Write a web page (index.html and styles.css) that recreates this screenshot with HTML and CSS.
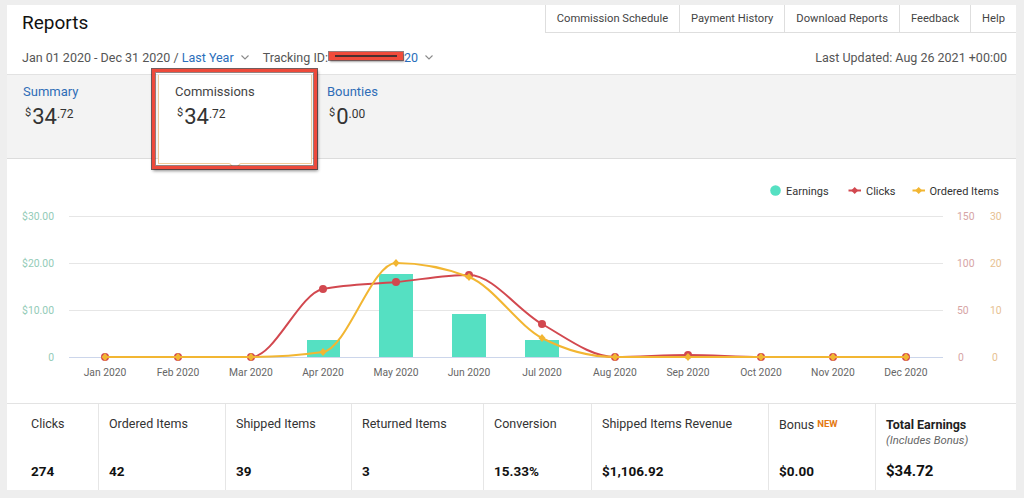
FILE: index.html
```html
<!DOCTYPE html>
<html lang="en">
<head>
<meta charset="utf-8">
<title>Reports</title>
<link rel="stylesheet" href="styles.css">
</head>
<body>
<div class="card">
  <header class="top">
    <h1 class="title">Reports</h1>
    <nav class="tabs">
      <a class="tab">Commission Schedule</a>
      <a class="tab">Payment History</a>
      <a class="tab">Download Reports</a>
      <a class="tab">Feedback</a>
      <a class="tab">Help</a>
    </nav>
  </header>

  <div class="filters">
    <div class="range">
      <span>Jan 01 2020 - Dec 31 2020 / </span><a class="link">Last Year</a><svg class="chev" width="8" height="5" viewBox="0 0 8 5"><path d="M0.5 0.5 L4 4 L7.5 0.5" fill="none" stroke="#8a8a8a" stroke-width="1.1"/></svg>
      <span class="tracking">Tracking ID:</span><span class="redact"></span><a class="link">20</a><svg class="chev" width="8" height="5" viewBox="0 0 8 5"><path d="M0.5 0.5 L4 4 L7.5 0.5" fill="none" stroke="#8a8a8a" stroke-width="1.1"/></svg>
    </div>
    <div class="updated">Last Updated: Aug 26 2021 +00:00</div>
  </div>

  <section class="summary">
    <div class="stab first">
      <div class="slabel">Summary</div>
      <div class="amt"><span class="cur">$</span>34<span class="cents">.72</span></div>
    </div>
    <div class="stab active">
      <div class="slabel">Commissions</div>
      <div class="amt"><span class="cur">$</span>34<span class="cents">.72</span></div>
    </div>
    <div class="stab last">
      <div class="slabel">Bounties</div>
      <div class="amt"><span class="cur">$</span>0<span class="cents">.00</span></div>
    </div>
  </section>
  <div class="annot"></div>

  <section class="chart">
    <svg width="1009" height="244" viewBox="7 159 1009 244" xmlns="http://www.w3.org/2000/svg">
      <!-- legend -->
      <circle cx="775.5" cy="190.5" r="5.3" fill="#55e0c2"/>
      <text class="lg" x="786" y="194.5">Earnings</text>
      <line x1="848.5" y1="190.5" x2="861" y2="190.5" stroke="#d2484f" stroke-width="2"/>
      <path d="M854.7 187 L858.2 190.5 L854.7 194 L851.2 190.5Z" fill="#d2484f"/>
      <text class="lg" x="866" y="194.5">Clicks</text>
      <line x1="912.5" y1="190.5" x2="925" y2="190.5" stroke="#f2b632" stroke-width="2"/>
      <path d="M918.7 187 L922.2 190.5 L918.7 194 L915.2 190.5Z" fill="#f2b632"/>
      <text class="lg" x="929.5" y="194.5">Ordered Items</text>

      <!-- grid -->
      <g stroke="#e6e6e6" stroke-width="1">
        <line x1="69" y1="216.5" x2="943" y2="216.5"/>
        <line x1="69" y1="263.5" x2="943" y2="263.5"/>
        <line x1="69" y1="310.5" x2="943" y2="310.5"/>
      </g>
      <line x1="69" y1="357.5" x2="943" y2="357.5" stroke="#ccd6eb" stroke-width="1"/>

      <!-- left axis -->
      <g class="ax-l" text-anchor="end">
        <text x="54" y="219.5">$30.00</text>
        <text x="54" y="266.5">$20.00</text>
        <text x="54" y="313.5">$10.00</text>
        <text x="54" y="360.5">0</text>
      </g>
      <!-- right axes -->
      <g class="ax-r1">
        <text x="957" y="219.5">150</text>
        <text x="957" y="266.5">100</text>
        <text x="957" y="313.5">50</text>
        <text x="958" y="360.5">0</text>
      </g>
      <g class="ax-r2">
        <text x="990" y="219.5">30</text>
        <text x="990" y="266.5">20</text>
        <text x="990" y="313.5">10</text>
        <text x="992" y="360.5">0</text>
      </g>

      <!-- x axis -->
      <g class="ax-x" text-anchor="middle">
        <text x="105" y="375.5">Jan 2020</text>
        <text x="178" y="375.5">Feb 2020</text>
        <text x="251" y="375.5">Mar 2020</text>
        <text x="323" y="375.5">Apr 2020</text>
        <text x="396" y="375.5">May 2020</text>
        <text x="469" y="375.5">Jun 2020</text>
        <text x="542" y="375.5">Jul 2020</text>
        <text x="615" y="375.5">Aug 2020</text>
        <text x="688" y="375.5">Sep 2020</text>
        <text x="761" y="375.5">Oct 2020</text>
        <text x="833" y="375.5">Nov 2020</text>
        <text x="906" y="375.5">Dec 2020</text>
      </g>

      <!-- bars -->
      <g fill="#55e0c2">
        <rect x="307" y="340" width="33" height="17"/>
        <rect x="379" y="274" width="34" height="83"/>
        <rect x="452" y="314" width="34" height="43"/>
        <rect x="525" y="340" width="34" height="17"/>
      </g>

      <!-- clicks -->
      <path d="M105,357 L251,357 C275,357 299,293.6 323,289 C347.3,284.3 371.7,284.3 396,282 C420.3,279.7 444.7,275 469,275 C493.3,275 517.7,310.3 542,324 C566.3,337.7 590.7,357 615,357 C639.3,357 663.7,355 688,355 C712.3,355 736.7,357 761,357 L906,357" fill="none" stroke="#d2484f" stroke-width="2"/>
      <g fill="#d2484f">
        <circle cx="105" cy="357" r="4"/>
        <circle cx="178" cy="357" r="4"/>
        <circle cx="251" cy="357" r="4"/>
        <circle cx="323" cy="289" r="4"/>
        <circle cx="396" cy="282" r="4"/>
        <circle cx="469" cy="275" r="4"/>
        <circle cx="542" cy="324" r="4"/>
        <circle cx="615" cy="357" r="4"/>
        <circle cx="688" cy="355" r="4"/>
        <circle cx="761" cy="357" r="4"/>
        <circle cx="833" cy="357" r="4"/>
        <circle cx="906" cy="357" r="4"/>
      </g>

      <!-- ordered items -->
      <path d="M105,357 L251,357 C275,357 299,355.3 323,352 C347.3,348.6 371.7,263 396,263 C420.3,263 444.7,267.7 469,277 C493.3,286.3 517.7,325.3 542,338 C566.3,350.7 590.7,357 615,357 L906,357" fill="none" stroke="#f2b632" stroke-width="2"/>
      <g fill="#f2b632">
        <path d="M105 353 L108.5 357 L105 361 L101.5 357Z"/>
        <path d="M178 353 L181.5 357 L178 361 L174.5 357Z"/>
        <path d="M251 353 L254.5 357 L251 361 L247.5 357Z"/>
        <path d="M323 348 L326.5 352 L323 356 L319.5 352Z"/>
        <path d="M396 259 L399.5 263 L396 267 L392.5 263Z"/>
        <path d="M469 273 L472.5 277 L469 281 L465.5 277Z"/>
        <path d="M542 334 L545.5 338 L542 342 L538.5 338Z"/>
        <path d="M615 353 L618.5 357 L615 361 L611.5 357Z"/>
        <path d="M688 353 L691.5 357 L688 361 L684.5 357Z"/>
        <path d="M761 353 L764.5 357 L761 361 L757.5 357Z"/>
        <path d="M833 353 L836.5 357 L833 361 L829.5 357Z"/>
        <path d="M906 353 L909.5 357 L906 361 L902.5 357Z"/>
      </g>
    </svg>
  </section>

  <section class="stats">
    <div class="stat c1"><div class="lbl">Clicks</div><div class="val">274</div></div>
    <div class="stat c2"><div class="lbl">Ordered Items</div><div class="val">42</div></div>
    <div class="stat c3"><div class="lbl">Shipped Items</div><div class="val">39</div></div>
    <div class="stat c4"><div class="lbl">Returned Items</div><div class="val">3</div></div>
    <div class="stat c5"><div class="lbl">Conversion</div><div class="val">15.33%</div></div>
    <div class="stat c6"><div class="lbl">Shipped Items Revenue</div><div class="val">$1,106.92</div></div>
    <div class="stat c7"><div class="lbl">Bonus <span class="new">NEW</span></div><div class="val">$0.00</div></div>
    <div class="stat c8">
      <div><div class="lbl strong">Total Earnings</div><div class="sub">(Includes Bonus)</div></div>
      <div class="val big">$34.72</div>
    </div>
  </section>
</div>
</body>
</html>
```

FILE: styles.css
```css
html, body {
  margin: 0;
  padding: 0;
}

body {
  background: #eeeeee;
  font-family: Roboto, "Liberation Sans", Arial, sans-serif;
  color: #333;
}

.card {
  position: relative;
  margin: 5px 8px 0 7px;
  height: 485px;
  background: #fff;
  display: flex;
  flex-direction: column;
}

/* header */
.top {
  display: flex;
  justify-content: space-between;
  align-items: flex-start;
  height: 31px;
  flex: 0 0 31px;
}

.title {
  margin: 0;
  padding: 4px 0 0 15px;
  font-size: 19px;
  font-weight: 400;
  line-height: 27px;
  color: #111;
}

.tabs {
  display: flex;
  height: 28px;
  box-sizing: border-box;
  border-bottom: 1px solid #dedede;
}

.tab {
  display: block;
  padding: 0 11px;
  line-height: 27px;
  font-size: 11.2px;
  color: #444;
  border-left: 1px solid #dedede;
  white-space: nowrap;
}

/* filters */
.filters {
  display: flex;
  justify-content: space-between;
  align-items: center;
  height: 38px;
  flex: 0 0 38px;
  box-sizing: border-box;
  padding: 4px 9px 0 15px;
  font-size: 12.5px;
  color: #555;
}

.range {
  display: flex;
  align-items: center;
  white-space: pre;
}

.link {
  color: #2a6ebb;
}

.chev {
  display: block;
  margin: 1px 14px 0 7px;
}

.redact {
  display: inline-block;
  position: relative;
  width: 74px;
  height: 8px;
  margin: -3px 1px 0 1px;
  background: #f04b3b;
  box-shadow: 0 0 0 1px rgba(70, 20, 20, 0.55), 1px 2px 2px rgba(0, 0, 0, 0.35);
}

.redact::after {
  content: "";
  position: absolute;
  left: 6px;
  right: 6px;
  top: 3px;
  height: 2px;
  background: #4a3030;
}

/* summary band */
.summary {
  display: flex;
  height: 85px;
  flex: 0 0 85px;
  box-sizing: border-box;
  background: #f3f3f3;
  border-top: 1px solid #e2e2e2;
  border-bottom: 1px solid #dcdcdc;
}

.stab {
  box-sizing: border-box;
  padding: 9px 0 0 16px;
}

.stab.first {
  width: 151px;
}

.stab.active {
  position: relative;
  z-index: 2;
  width: 154px;
  height: 89px;
  background: #fff;
  border: 1px solid #f0cd9b;
  border-top: none;
}

.stab.active::after {
  content: "";
  position: absolute;
  left: 50%;
  bottom: -5px;
  width: 8px;
  height: 8px;
  margin-left: -4px;
  box-sizing: border-box;
  background: #fff;
  border-right: 1px solid #f0cd9b;
  border-bottom: 1px solid #f0cd9b;
  transform: rotate(45deg);
}

.stab.last {
  padding-left: 15px;
}

.slabel {
  font-size: 13px;
  line-height: 16px;
  color: #2f6db7;
}

.active .slabel {
  color: #444;
}

.amt {
  margin-top: 4px;
  padding-left: 2px;
  font-size: 22px;
  line-height: 26px;
  color: #333;
}

.cur {
  font-size: 11px;
  line-height: 1;
  vertical-align: 8px;
  margin-right: 1px;
}

.cents {
  font-size: 12px;
  line-height: 1;
  vertical-align: 6px;
}

/* annotation box */
.annot {
  position: absolute;
  z-index: 3;
  left: 145px;
  top: 64px;
  width: 165px;
  height: 100px;
  box-sizing: border-box;
  border: 3px solid #ee4a3b;
  box-shadow: 0 0 0 1px rgba(60, 25, 25, 0.7), inset 0 0 0 1px rgba(60, 25, 25, 0.55), 1px 2px 3px rgba(0, 0, 0, 0.45);
  pointer-events: none;
}

/* chart */
.chart {
  flex: 0 0 244px;
  height: 244px;
}

.chart svg {
  display: block;
}

.lg {
  font-size: 11px;
  fill: #333;
}

.ax-l text {
  font-size: 10.4px;
  fill: #93cbb7;
}

.ax-r1 text {
  font-size: 10.4px;
  fill: #d6a5a5;
}

.ax-r2 text {
  font-size: 10.4px;
  fill: #e7c192;
}

.ax-x text {
  font-size: 10.3px;
  fill: #666;
}

/* stats */
.stats {
  display: flex;
  height: 87px;
  flex: 0 0 87px;
  box-sizing: border-box;
  border-top: 1px solid #e3e3e3;
}

.stat {
  display: flex;
  flex-direction: column;
  justify-content: space-between;
  box-sizing: border-box;
  padding: 12px 8px 10px 10px;
  border-left: 1px solid #e6e6e6;
}

.c1 { width: 91px; padding-left: 24px; border-left: none; }
.c2 { width: 127px; }
.c3 { width: 126px; }
.c4 { width: 132px; }
.c5 { width: 108px; }
.c6 { width: 177px; }
.c7 { width: 107px; }
.c8 { width: 141px; }

.lbl {
  font-size: 12.5px;
  line-height: 16px;
  color: #333;
  white-space: nowrap;
}

.lbl.strong {
  font-weight: 700;
  color: #222;
  line-height: 17px;
}

.sub {
  font-size: 11.3px;
  line-height: 15px;
  font-style: italic;
  color: #666;
}

.new {
  font-size: 9.5px;
  font-weight: 700;
  color: #e47911;
  vertical-align: 2px;
}

.val {
  font-size: 13.5px;
  line-height: 18px;
  font-weight: 700;
  color: #111;
}

.val.big {
  font-size: 15px;
}
```
